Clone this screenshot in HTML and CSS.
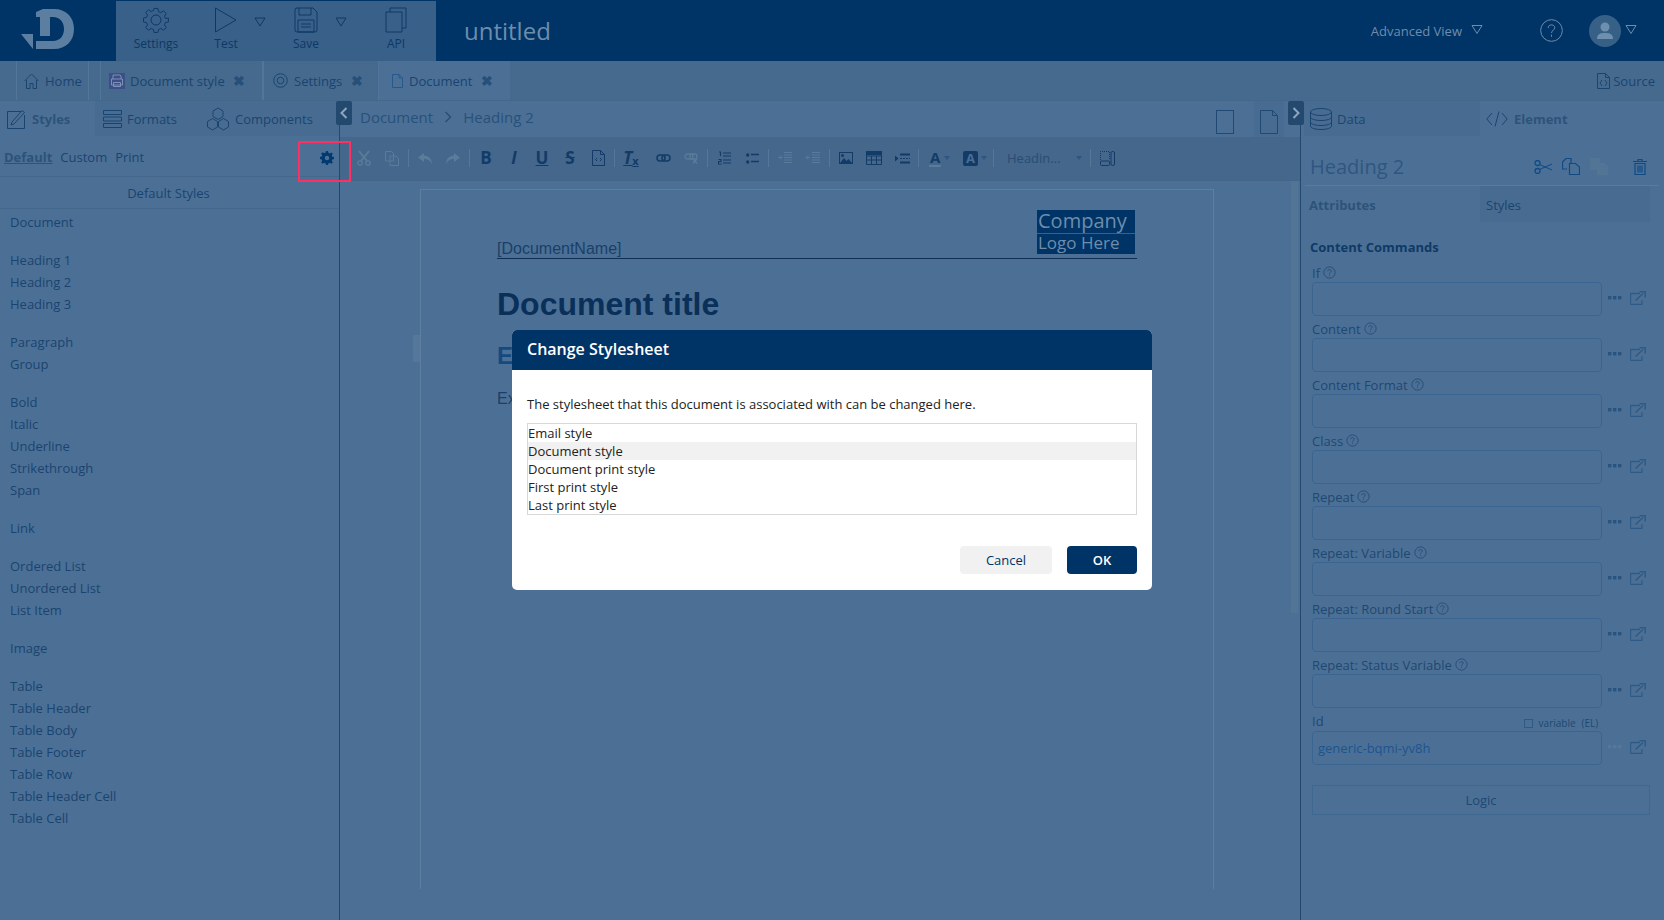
FILE: index.html
```html
<!DOCTYPE html>
<html lang="en">
<head>
  <meta charset="UTF-8">
  <title>untitled</title>
  <link rel="stylesheet" href="styles.css">
</head>
<body>

<svg class="defs" width="0" height="0">
  <symbol id="help" viewBox="0 0 12 12"><circle cx="6" cy="6" r="5.2" fill="none" stroke="currentColor" vector-effect="non-scaling-stroke"/><path d="M4.400 4.800C4.400 3.800 5.100 3.300 6 3.300S7.600 3.900 7.600 4.700C7.600 5.800 6 5.900 6 7.200M6 8v1" fill="none" stroke="currentColor" vector-effect="non-scaling-stroke"/></symbol>
  <symbol id="dots" viewBox="0 0 14 4"><rect x="0" y="0" width="3.400" height="3.400"/><rect x="5" y="0" width="3.400" height="3.400"/><rect x="10" y="0" width="3.400" height="3.400"/></symbol>
  <symbol id="popout" viewBox="0 0 16 14"><path d="M10 2.500H1.500a1 1 0 0 0-1 1v9a1 1 0 0 0 1 1h9.500a1 1 0 0 0 1-1V9" fill="none" stroke="currentColor" stroke-width="1.300"/><path d="M5.500 9.500L13 2.500M9.500 .8h5.700v5.700" fill="none" stroke="currentColor" stroke-width="1.500"/></symbol>
  <symbol id="tri" viewBox="0 0 12 10"><path d="M1 1h10L6 9z" fill="none" stroke="currentColor"/></symbol>
  <symbol id="gear" viewBox="0 0 26 26"><path d="M11 1h4l.7 3.300 2.400 1 2.800-1.900 2.800 2.800-1.900 2.800 1 2.400L26 11v4l-3.200.7-1 2.400 1.900 2.800-2.800 2.800-2.800-1.900-2.400 1L15 26h-4l-.7-3.200-2.400-1-2.800 1.900-2.800-2.800 1.900-2.800-1-2.400L0 15v-4l3.200-.7 1-2.400-1.900-2.800 2.800-2.800 2.800 1.900 2.400-1z" transform="translate(.5 .5) scale(.96)" fill="none" stroke="currentColor"/><circle cx="13" cy="13" r="5" fill="none" stroke="currentColor"/></symbol>
</svg>

<header class="topbar">
  <div class="logo">
    <svg width="56" height="42" viewBox="0 0 56 42"><path d="M1 26h12v15zM16 4l7-3h11c12 0 20 8 20 20s-8 20-20 20H16V33h17c7 0 11-5 11-12S40 9 33 9h-3v19H20V9h-4z" fill="#5c7fa1"/></svg>
  </div>
  <nav class="toolbox">
    <div class="tool tool-settings">
      <svg width="26" height="26"><use href="#gear"/></svg>
      <span>Settings</span>
    </div>
    <div class="tool tool-test">
      <svg width="24" height="26" viewBox="0 0 24 26"><path d="M1.500 1v24L22 13z" fill="none" stroke="currentColor"/></svg>
      <span>Test</span>
    </div>
    <svg class="tool-drop" width="12" height="10"><use href="#tri"/></svg>
    <div class="tool tool-save">
      <svg width="24" height="26" viewBox="0 0 24 26"><path d="M1 3a2 2 0 0 1 2-2h16l4 4v18a2 2 0 0 1-2 2H3a2 2 0 0 1-2-2z" fill="none" stroke="currentColor"/><path d="M5 1v7h12V1M4 13h16v12H4zM7 17h10M7 20h10" fill="none" stroke="currentColor"/></svg>
      <span>Save</span>
    </div>
    <svg class="tool-drop tool-drop-save" width="12" height="10"><use href="#tri"/></svg>
    <div class="tool tool-api">
      <svg width="22" height="26" viewBox="0 0 22 26"><path d="M5 5V1h16v20h-4M1 5h16v20H1z" fill="none" stroke="currentColor"/></svg>
      <span>API</span>
    </div>
  </nav>
  <div class="doc-title">untitled</div>
  <div class="topbar-right">
    <span class="adv-view">Advanced View</span>
    <svg class="adv-tri" width="12" height="11"><use href="#tri"/></svg>
    <svg class="top-help" width="25" height="25"><use href="#help"/></svg>
    <span class="avatar"><svg width="18" height="18" viewBox="0 0 18 18"><circle cx="9" cy="5" r="4.500" fill="#6e8fae"/><path d="M1 17c0-5 3-6 8-6s8 1 8 6z" fill="#6e8fae"/></svg></span>
    <svg class="avatar-tri" width="12" height="11"><use href="#tri"/></svg>
  </div>
</header>

<div class="tabbar">
  <div class="tab tab-home">
    <svg width="15" height="16" viewBox="0 0 15 16"><path d="M.5 8L7.500 1l7 7M2.500 7v8.500h3.500v-5h3v5h3.500V7" fill="none" stroke="currentColor"/></svg>
    <span>Home</span>
  </div>
  <div class="tab tab-style">
    <svg width="16" height="16" viewBox="0 0 16 16"><rect width="16" height="16" fill="#3c4f87"/><path d="M4 6V2h7l1 1v3M2.500 6h11v6h-11zM4.500 9.500h7v4h-7z" fill="none" stroke="#7c92b8"/></svg>
    <span>Document style</span><b class="close">&#10006;</b>
  </div>
  <div class="tab tab-settings">
    <svg width="15" height="15" viewBox="0 0 15 15"><circle cx="7.500" cy="7.500" r="6.800" fill="none" stroke="currentColor"/><circle cx="7.500" cy="7.500" r="3.300" fill="none" stroke="currentColor"/></svg>
    <span>Settings</span><b class="close">&#10006;</b>
  </div>
  <div class="tab tab-doc">
    <svg class="icon-blue" width="11" height="14" viewBox="0 0 11 14"><path d="M.5.500h6.500l3.500 3.500v9.500H.5zM7 .5V4h3.500" fill="none" stroke="currentColor"/></svg>
    <span>Document</span><b class="close">&#10006;</b>
  </div>
  <div class="tab-source">
    <svg width="13" height="16" viewBox="0 0 13 16"><path d="M.5.500h8l4 4v11H.5zM8.500.5v4h4M5 7L3 10l2 3M8 7l2 3-2 3" fill="none" stroke="currentColor"/></svg>
    <span>Source</span>
  </div>
</div>

<div class="workspace">
  <aside class="left-panel">
    <div class="panel-tabs">
      <div class="panel-tab panel-tab-on">
        <svg width="20" height="20" viewBox="0 0 20 20"><path d="M.5 2.500h14M.5 2.500v17h17V6" fill="none" stroke="currentColor"/><path d="M4 16l1-3L15 1.500l2.500 2L7 15z" fill="none" stroke="currentColor"/></svg>
        <b>Styles</b>
      </div>
      <div class="panel-tab tab-formats">
        <svg width="19" height="18" viewBox="0 0 19 18"><path d="M.5.500h18v4H.5zM.5 7h18v4H.5zM.5 13.500h18v4H.5z" fill="none" stroke="currentColor"/></svg>
        <span>Formats</span>
      </div>
      <div class="panel-tab tab-components">
        <svg width="24" height="24" viewBox="0 0 24 24"><path d="M12 1l5 3v5.500l-5 3-5-3V4zM6.500 11.500l5 3V20l-5 3-5-3v-5.500zM17.500 11.500l5 3V20l-5 3-5-3v-5.500z" fill="none" stroke="currentColor"/></svg>
        <span>Components</span>
      </div>
    </div>
    <div class="sheet-row">
      <b class="sheet-on">Default</b><span>Custom</span><span>Print</span>
      <svg class="sheet-gear" width="14" height="14" viewBox="0 0 14 14"><path d="M6 0h2l.4 1.800 1.400.6 1.600-1 1.400 1.400-1 1.600.6 1.400L14 6v2l-1.600.4-.6 1.400 1 1.600-1.400 1.400-1.600-1-1.400.6L8 14H6l-.4-1.600-1.400-.6-1.600 1-1.400-1.400 1-1.600-.6-1.400L0 8V6l1.600-.4.6-1.400-1-1.600 1.400-1.400 1.600 1 1.400-.6zM7 4.800a2.200 2.200 0 1 0 0 4.400 2.200 2.200 0 0 0 0-4.400z" fill="#003a70" fill-rule="evenodd"/></svg>
    </div>
    <div class="sheet-title">Default Styles</div>
    <div class="style-list">
      <ul><li>Document</li></ul>
      <ul><li>Heading 1</li><li>Heading 2</li><li>Heading 3</li></ul>
      <ul><li>Paragraph</li><li>Group</li></ul>
      <ul><li>Bold</li><li>Italic</li><li>Underline</li><li>Strikethrough</li><li>Span</li></ul>
      <ul><li>Link</li></ul>
      <ul><li>Ordered List</li><li>Unordered List</li><li>List Item</li></ul>
      <ul><li>Image</li></ul>
      <ul><li>Table</li><li>Table Header</li><li>Table Body</li><li>Table Footer</li><li>Table Row</li><li>Table Header Cell</li><li>Table Cell</li></ul>
    </div>
  </aside>

  <main class="center">
    <div class="crumbs">
      <span>Document</span>
      <svg width="8" height="12" viewBox="0 0 8 12"><path d="M1.500 1l5 5-5 5" fill="none" stroke="currentColor" stroke-width="1.500"/></svg>
      <span>Heading 2</span>
      <div class="view-btns">
        <span class="view-btn"><svg width="18" height="24"><rect x=".5" y=".5" width="17" height="23" fill="none" stroke="currentColor"/></svg></span>
        <span class="view-btn view-btn-on"><svg width="18" height="24"><path d="M.5.500h12l5 5v18H.5zM12.500.5v5h5" fill="none" stroke="currentColor"/></svg></span>
      </div>
    </div>

    <div class="toolbar">
      <span class="cell faded"><svg width="14" height="16" viewBox="0 0 14 16"><path d="M2 1l8 10M12 1L4 11" stroke="currentColor" stroke-width="2" fill="none"/><circle cx="3" cy="13" r="2.200" fill="none" stroke="currentColor" stroke-width="1.300"/><circle cx="11" cy="13" r="2.200" fill="none" stroke="currentColor" stroke-width="1.300"/></svg></span>
      <span class="cell faded"><svg width="14" height="15" viewBox="0 0 14 15"><path d="M.5.500h6l2 2V10H.5zM5 5h6l2.500 2.500v7H5z" fill="none" stroke="currentColor"/></svg></span>
      <i class="sep"></i>
      <span class="cell faded"><svg width="14" height="11" viewBox="0 0 14 11"><path d="M6 0L0 4.500 6 9V6c3 0 6 1 8 5 0-5-3-8-8-8.500z" fill="currentColor"/></svg></span>
      <span class="cell faded"><svg width="14" height="11" viewBox="0 0 14 11"><path d="M8 0l6 4.500L8 9V6c-3 0-6 1-8 5 0-5 3-8 8-8.500z" fill="currentColor"/></svg></span>
      <i class="sep"></i>
      <b class="cell tg">B</b>
      <b class="cell tg tg-i">I</b>
      <b class="cell tg tg-u">U</b>
      <b class="cell tg tg-s">S</b>
      <span class="cell"><svg width="13" height="16" viewBox="0 0 13 16"><path d="M.5.500h8l4 4v11H.5zM8.500.5v4h4" fill="none" stroke="currentColor"/><path d="M5 8L3.500 9.500 5 11M8 8l1.500 1.500L8 11" fill="none" stroke="currentColor"/></svg></span>
      <i class="sep"></i>
      <span class="cell tg tg-clear"><b>T</b><small>x</small></span>
      <span class="cell cell-link"><svg width="15" height="8" viewBox="0 0 15 8"><rect x="1" y="1" width="8" height="6" rx="3" fill="none" stroke="currentColor" stroke-width="1.500"/><rect x="6" y="1" width="8" height="6" rx="3" fill="none" stroke="currentColor" stroke-width="1.500"/></svg></span>
      <span class="cell faded"><svg width="14" height="11" viewBox="0 0 14 11"><rect x="1" y="1" width="8" height="5" rx="2.500" fill="none" stroke="currentColor" stroke-width="1.300"/><rect x="6" y="1" width="7" height="5" rx="2.500" fill="none" stroke="currentColor" stroke-width="1.300"/><path d="M9 6l4 4.500M13 6l-4 4.500" stroke="currentColor" stroke-width="1.200"/></svg></span>
      <i class="sep"></i>
      <span class="cell"><svg width="13" height="14" viewBox="0 0 13 14"><path d="M1 1h1.500v4M5 2h8M5 5h8M5 9h8M5 12h8M.5 8.500h2.500v2H.5v2.500h3" fill="none" stroke="currentColor" stroke-width="1.100"/></svg></span>
      <span class="cell"><svg width="13" height="11" viewBox="0 0 13 11"><circle cx="1.700" cy="2" r="1.700" fill="currentColor"/><circle cx="1.700" cy="9" r="1.700" fill="currentColor"/><path d="M5 1.500h8M5 8.500h8" stroke="currentColor" stroke-width="1.600"/></svg></span>
      <i class="sep"></i>
      <span class="cell faded"><svg width="14" height="12" viewBox="0 0 14 12"><path d="M6 .5h8M6 3h8M6 5.500h8M6 8h8M6 10.500h8M0 5.500h4M2 3.500l2 2-2 2" fill="none" stroke="currentColor"/></svg></span>
      <span class="cell faded"><svg width="14" height="12" viewBox="0 0 14 12"><path d="M6 .5h8M6 3h8M6 5.500h8M6 8h8M6 10.500h8M0 5.500h4M2 3.500l-2 2 2 2" fill="none" stroke="currentColor"/></svg></span>
      <i class="sep"></i>
      <span class="cell"><svg width="14" height="12" viewBox="0 0 14 12"><rect x=".5" y=".5" width="13" height="11" fill="none" stroke="currentColor"/><circle cx="3.500" cy="3.500" r="1.500" fill="currentColor"/><path d="M1 11l4-5 2.500 3 2-2 3.500 4z" fill="currentColor"/></svg></span>
      <span class="cell"><svg width="16" height="14" viewBox="0 0 16 14"><path d="M.5 1h15v12.500H.5zM.5 5h15M.5 9h15M5.500 5v8M10.500 5v8" fill="none" stroke="currentColor"/><rect y="0" width="16" height="4" fill="currentColor"/></svg></span>
      <span class="cell"><svg width="15" height="11" viewBox="0 0 15 11"><path d="M0 2.500L3.500 5.500 0 8.500zM5 .5h10v2H5zM5 8.500h10v2H5z" fill="currentColor"/><path d="M5 5.500h10" stroke="currentColor" stroke-dasharray="2 1"/></svg></span>
      <i class="sep"></i>
      <span class="color-btn color-btn-fg"><b class="a-under">A</b><i class="caret"></i></span>
      <span class="color-btn color-btn-bg"><b class="a-box">A</b><i class="caret"></i></span>
      <i class="sep"></i>
      <span class="format-select">Headin...<i class="caret"></i></span>
      <i class="sep"></i>
      <span class="cell"><svg width="15" height="15" viewBox="0 0 15 15"><path d="M.5 9V.5h9V9" fill="none" stroke="currentColor" stroke-dasharray="1 1"/><rect x=".5" y="10" width="9" height="4.500" rx="1" fill="none" stroke="currentColor"/><rect x="11" y=".5" width="3.500" height="14" rx="1.500" fill="none" stroke="currentColor"/></svg></span>
    </div>

    <div class="canvas">
      <div class="canvas-thumb-left"></div>
      <div class="doc-page">
        <div class="doc-header">
          <span class="doc-name">[DocumentName]</span>
          <div class="doc-logo"><span class="logo-l1">Company</span><span class="logo-l2">Logo Here</span></div>
        </div>
        <h1 class="doc-h1">Document title</h1>
        <h2 class="doc-h2">E</h2>
        <p class="doc-p">Ex</p>
      </div>
      <div class="canvas-scroll"><div class="canvas-thumb"></div></div>
    </div>
  </main>

  <aside class="right-panel">
    <div class="panel-tabs">
      <div class="panel-tab tab-data">
        <svg width="22" height="22" viewBox="0 0 22 22"><ellipse cx="11" cy="4" rx="10.500" ry="3.500" fill="none" stroke="currentColor"/><path d="M.5 4v14c0 2 4.700 3.500 10.500 3.500S21.500 20 21.500 18V4M.5 9c0 2 4.700 3.500 10.500 3.500S21.500 11 21.500 9M.5 14c0 2 4.700 3.500 10.500 3.500S21.500 16 21.500 14" fill="none" stroke="currentColor"/></svg>
        <span>Data</span>
      </div>
      <div class="panel-tab panel-tab-on tab-element">
        <svg width="22" height="16" viewBox="0 0 22 16"><path d="M6 2L.8 8 6 14M16 2l5.200 6L16 14M13 .5L9 15.500" fill="none" stroke="currentColor"/></svg>
        <b>Element</b>
      </div>
    </div>
    <div class="el-head">
      <span class="el-title">Heading 2</span>
      <div class="el-tools">
        <svg class="blue-icon" width="18" height="14" viewBox="0 0 18 14"><circle cx="3.500" cy="3" r="2.500" fill="none" stroke="currentColor" stroke-width="1.300"/><circle cx="3.500" cy="11" r="2.500" fill="none" stroke="currentColor" stroke-width="1.300"/><path d="M5.500 4.500L18 10M5.500 9.500L18 4" fill="none" stroke="currentColor"/></svg>
        <svg class="blue-icon" width="18" height="17" viewBox="0 0 18 17"><path d="M5 11H.5V4l3.500-3.500h5V5M7.500 5.500h6l4 3.500v7.500H7.500z" fill="none" stroke="currentColor" stroke-width="1.200"/></svg>
        <svg class="paste-icon" width="18" height="17" viewBox="0 0 18 17"><path d="M0 0h10v5h4l4 4v8H7v-5H0z" fill="currentColor"/></svg>
        <svg class="trash-icon blue-icon" width="14" height="16" viewBox="0 0 14 16"><path d="M0 2.500h14M5 2.500V.5h4v2M2 4.500h10v11H2zM5 6.500v7M7 6.500v7M9 6.500v7" fill="none" stroke="currentColor" stroke-width="1.200"/></svg>
      </div>
    </div>
    <div class="el-tabs">
      <b class="el-tab">Attributes</b>
      <span class="el-tab el-tab-off">Styles</span>
    </div>
    <h3 class="cmd-title">Content Commands</h3>
    <div class="field"><label>If <svg width="13" height="13"><use href="#help"/></svg></label><div class="field-row"><div class="input"></div><svg class="dots" width="14" height="4"><use href="#dots"/></svg><svg class="popout" width="16" height="14"><use href="#popout"/></svg></div></div>
    <div class="field"><label>Content <svg width="13" height="13"><use href="#help"/></svg></label><div class="field-row"><div class="input"></div><svg class="dots" width="14" height="4"><use href="#dots"/></svg><svg class="popout" width="16" height="14"><use href="#popout"/></svg></div></div>
    <div class="field"><label>Content Format <svg width="13" height="13"><use href="#help"/></svg></label><div class="field-row"><div class="input"></div><svg class="dots" width="14" height="4"><use href="#dots"/></svg><svg class="popout" width="16" height="14"><use href="#popout"/></svg></div></div>
    <div class="field"><label>Class <svg width="13" height="13"><use href="#help"/></svg></label><div class="field-row"><div class="input"></div><svg class="dots" width="14" height="4"><use href="#dots"/></svg><svg class="popout" width="16" height="14"><use href="#popout"/></svg></div></div>
    <div class="field"><label>Repeat <svg width="13" height="13"><use href="#help"/></svg></label><div class="field-row"><div class="input"></div><svg class="dots" width="14" height="4"><use href="#dots"/></svg><svg class="popout" width="16" height="14"><use href="#popout"/></svg></div></div>
    <div class="field"><label>Repeat: Variable <svg width="13" height="13"><use href="#help"/></svg></label><div class="field-row"><div class="input"></div><svg class="dots" width="14" height="4"><use href="#dots"/></svg><svg class="popout" width="16" height="14"><use href="#popout"/></svg></div></div>
    <div class="field"><label>Repeat: Round Start <svg width="13" height="13"><use href="#help"/></svg></label><div class="field-row"><div class="input"></div><svg class="dots" width="14" height="4"><use href="#dots"/></svg><svg class="popout" width="16" height="14"><use href="#popout"/></svg></div></div>
    <div class="field"><label>Repeat: Status Variable <svg width="13" height="13"><use href="#help"/></svg></label><div class="field-row"><div class="input"></div><svg class="dots" width="14" height="4"><use href="#dots"/></svg><svg class="popout" width="16" height="14"><use href="#popout"/></svg></div></div>
    <div class="field field-id">
      <label>Id <span class="var-check"><i class="checkbox"></i>variable <small>(EL)</small></span></label>
      <div class="field-row"><div class="input input-val">generic-bqmi-yv8h</div><svg class="dots dots-off" width="14" height="4"><use href="#dots"/></svg><svg class="popout" width="16" height="14"><use href="#popout"/></svg></div>
    </div>
    <div class="logic-btn">Logic</div>
  </aside>

  <span class="collapse-btn collapse-left"><svg width="8" height="12" viewBox="0 0 8 12"><path d="M6.500 1l-5 5 5 5" fill="none" stroke="currentColor" stroke-width="2"/></svg></span>
  <span class="collapse-btn collapse-right"><svg width="8" height="12" viewBox="0 0 8 12"><path d="M1.500 1l5 5-5 5" fill="none" stroke="currentColor" stroke-width="2"/></svg></span>
</div>

<div class="highlight"></div>

<div class="modal">
  <div class="modal-head">Change Stylesheet</div>
  <div class="modal-body">
    <p class="modal-text">The stylesheet that this document is associated with can be changed here.</p>
    <ul class="sheet-list">
      <li>Email style</li>
      <li class="sheet-current">Document style</li>
      <li>Document print style</li>
      <li>First print style</li>
      <li>Last print style</li>
    </ul>
    <div class="modal-btns">
      <button type="button" class="btn btn-cancel">Cancel</button>
      <button type="button" class="btn btn-ok">OK</button>
    </div>
  </div>
</div>

</body>
</html>
```

FILE: styles.css
```css
* {
  box-sizing: border-box;
}

html, body {
  margin: 0;
  height: 920px;
  overflow: hidden;
}

body {
  position: relative;
  font-family: "Open Sans", sans-serif;
  font-size: 13px;
  color: #1a4470;
  background-color: #4c7095;
}

.defs {
  position: absolute;
}

ul {
  list-style: none;
  margin: 0;
  padding: 0;
}

/* top bar */
.topbar {
  display: flex;
  height: 61px;
  background-color: #003366;
  color: #5c7fa1;
}

.logo {
  width: 116px;
  padding: 8px 0 0 20px;
}

.toolbox {
  display: flex;
  width: 320px;
  margin-top: 1px;
  background-color: #386088;
  color: #0e3866;
}

.tool {
  display: flex;
  flex-direction: column;
  align-items: center;
  gap: 3px;
  width: 60px;
  padding-top: 6px;
  font-size: 12px;
  line-height: 16px;
  color: #0e3866;
}

.tool-settings {
  margin-left: 10px;
}

.tool-test {
  margin-left: 20px;
  width: 40px;
}

.tool-save {
  margin-left: 20px;
  width: 40px;
}

.tool-api {
  margin-left: 29px;
  width: 40px;
}

.tool-drop {
  margin: 16px 0 0 8px;
}

.tool-drop-save {
  margin-left: 9px;
}

.doc-title {
  margin-left: 28px;
  font-size: 24px;
  line-height: 61px;
  color: #6d8dac;
}

.topbar-right {
  display: flex;
  align-items: center;
  margin-left: auto;
  padding-right: 27px;
  color: #6d8dac;
}

.adv-view {
  font-size: 13px;
}

.adv-tri {
  margin: 0 0 2px 9px;
}

.top-help {
  margin-left: 56px;
}

.avatar {
  display: flex;
  align-items: center;
  justify-content: center;
  width: 32px;
  height: 32px;
  margin-left: 25px;
  border-radius: 50%;
  background-color: #376087;
}

.avatar-tri {
  margin: 0 0 2px 4px;
}

/* tabs */
.tabbar {
  display: flex;
  align-items: stretch;
  height: 40px;
  padding-left: 16px;
  background-color: #466a8e;
  border-bottom: 1px solid #44688c;
}

.tab {
  display: flex;
  align-items: center;
  gap: 6px;
  border-left: 1px solid #52769a;
  font-size: 13px;
}

.tab-home {
  width: 73px;
  padding-left: 7px;
  margin-right: 11px;
  border-right: 1px solid #52769a;
}

.tab-style {
  width: 162px;
  padding-left: 8px;
  gap: 5px;
}

.tab-settings {
  width: 116px;
  padding-left: 9px;
  border-left: 2px solid #52769a;
}

.tab-doc {
  width: 132px;
  padding-left: 13px;
  background-color: #4c7095;
}

.icon-blue {
  color: #25598e;
}

.close {
  margin-left: 3px;
  font-size: 14px;
  color: #274f7a;
}

.tab-source {
  display: flex;
  align-items: center;
  gap: 3px;
  margin-left: auto;
  padding-right: 9px;
}

/* main columns */
.workspace {
  display: flex;
  position: relative;
  height: 819px;
}

.collapse-btn {
  display: flex;
  align-items: center;
  justify-content: center;
  position: absolute;
  top: 0;
  width: 16px;
  height: 24px;
  border-radius: 2px;
  background-color: #23496f;
  color: #8ea6bd;
}

.collapse-left {
  left: 336px;
}

.collapse-right {
  left: 1288px;
}

.left-panel {
  width: 340px;
  border-right: 1px solid #23496f;
}

.panel-tabs {
  display: flex;
  height: 35px;
}

.panel-tab {
  display: flex;
  align-items: center;
  background-color: #486c91;
}

.panel-tab-on {
  background-color: #4c7095;
}

.panel-tab-on b {
  color: #2c5379;
}

.left-panel .panel-tab {
  gap: 5px;
}

.left-panel .panel-tab-on {
  width: 95px;
  padding-left: 7px;
}

.tab-formats {
  width: 100px;
  padding-left: 8px;
}

.tab-components {
  width: 144px;
  padding-left: 11px;
}

.sheet-row {
  display: flex;
  align-items: center;
  gap: 8px;
  height: 41px;
  padding: 2px 4px 0 4px;
  border-bottom: 1px solid #44688c;
}

.sheet-on {
  text-decoration: underline;
  color: #2c5379;
}

.sheet-gear {
  margin: 2px 1px 0 auto;
}

.sheet-title {
  height: 32px;
  line-height: 32px;
  padding-right: 2px;
  text-align: center;
  border-bottom: 1px solid #44688c;
}

.style-list {
  padding: 2px 10px 0;
}

.style-list ul {
  margin-bottom: 16px;
}

.style-list li {
  height: 22px;
  line-height: 22px;
}

.center {
  display: flex;
  flex-direction: column;
  flex: 1;
  min-width: 0;
}

.crumbs {
  display: flex;
  align-items: center;
  gap: 11px;
  height: 36px;
  padding: 0 0 4px 20px;
  font-size: 15px;
  color: #28507a;
}

.view-btns {
  display: flex;
  margin: 0 16px -4px auto;
  height: 36px;
}

.view-btn {
  display: flex;
  align-items: center;
  justify-content: center;
  width: 30px;
  padding-top: 6px;
  color: #1f4a76;
}

.view-btn-on {
  margin-left: 14px;
  background-color: #486c91;
}

.toolbar {
  display: flex;
  align-items: center;
  height: 44px;
  padding: 0 0 1px 10px;
  background-color: #44678b;
  color: #123b68;
  border-bottom: 1px solid #42658a;
}

.cell {
  display: flex;
  flex: none;
  align-items: center;
  justify-content: center;
  width: 28px;
}

.cell-link {
  margin-left: 4px;
}

.faded {
  color: #5b7b9b;
}

.sep {
  flex: none;
  width: 1px;
  height: 18px;
  margin: 0 2px;
  background-color: #557899;
}

.tg {
  font-size: 17px;
  line-height: 20px;
  font-style: normal;
}

.tg-i {
  font-style: italic;
}

.tg-u {
  text-decoration: underline;
}

.tg-s {
  text-decoration: line-through;
}

.tg-clear {
  font-style: italic;
  text-decoration: underline;
}

.tg-clear small {
  margin-top: 6px;
  font-size: 11px;
  font-style: normal;
  font-weight: 700;
}

.color-btn {
  display: flex;
  flex: none;
  align-items: center;
  gap: 3px;
  width: 35px;
}

.color-btn-fg {
  padding-left: 8px;
}

.color-btn-bg {
  padding-left: 7px;
}

.a-under {
  font-size: 15px;
  line-height: 16px;
  border-bottom: 2px solid #5b7b9b;
  padding: 0 1px;
}

.a-box {
  width: 15px;
  height: 15px;
  line-height: 15px;
  text-align: center;
  font-size: 13px;
  border-radius: 2px;
  color: #4a6e92;
  background-color: #123b68;
}

.caret {
  display: inline-block;
  width: 0;
  height: 0;
  border: 3px solid transparent;
  border-top: 4px solid #2f5680;
  border-bottom: 0;
}

.format-select {
  display: flex;
  flex: none;
  align-items: center;
  width: 75px;
  margin: 0 6px 0 11px;
  font-size: 13px;
  color: #2a4c74;
}

.format-select .caret {
  margin-left: auto;
}

.canvas {
  display: flex;
  flex: 1;
  min-height: 0;
  position: relative;
  padding: 8px 0 0 80px;
}

.canvas-thumb-left {
  position: absolute;
  left: 73px;
  top: 154px;
  width: 7px;
  height: 27px;
  background-color: #557799;
}

.doc-page {
  width: 794px;
  height: 700px;
  padding: 20px 76px 0;
  border: 1px solid #5d7f9f;
  border-bottom: 0;
}

.doc-header {
  display: flex;
  align-items: flex-end;
  justify-content: space-between;
  height: 49px;
  padding-right: 2px;
  border-bottom: 1px solid #0f2f55;
  font-family: "Liberation Sans", sans-serif;
  font-size: 16px;
  color: #1a3f68;
}

.doc-name {
  line-height: 18px;
}

.doc-logo {
  display: flex;
  flex-direction: column;
  width: 98px;
  margin-bottom: 4px;
  background-color: #003366;
  font-family: "Open Sans", sans-serif;
  color: #6d8dac;
}

.logo-l1 {
  height: 24px;
  padding-left: 1px;
  font-size: 20px;
  line-height: 22px;
  border-bottom: 1px solid #6d4a74;
}

.logo-l2 {
  height: 20px;
  padding-left: 1px;
  font-size: 17px;
  line-height: 18px;
}

.doc-h1 {
  margin: 25px 0 0;
  font-family: "Liberation Sans", sans-serif;
  font-size: 32px;
  line-height: 40px;
  color: #0a2f58;
}

.doc-h2 {
  margin: 17px 0 0;
  font-family: "Liberation Sans", sans-serif;
  font-size: 24px;
  line-height: 30px;
  color: #154a80;
}

.doc-p {
  margin: 18px 0 0;
  font-family: "Liberation Sans", sans-serif;
  font-size: 16px;
  line-height: 20px;
  color: #1a3f68;
}

.canvas-scroll {
  position: absolute;
  top: 0;
  right: 0;
  width: 9px;
  height: 100%;
}

.canvas-thumb {
  width: 7px;
  height: 432px;
  background-color: #527495;
}

.right-panel {
  width: 364px;
  padding-left: 0;
  border-left: 1px solid #23496f;
}

.right-panel .panel-tabs {
  margin-left: 3px;
}

.tab-data {
  gap: 5px;
  width: 176px;
  padding-left: 6px;
}

.tab-element {
  gap: 6px;
  padding-left: 6px;
  flex: 1;
}

.el-head {
  display: flex;
  align-items: center;
  height: 50px;
  margin: 0 5px 0 4px;
  padding: 12px 0 0 5px;
  border-bottom: 1px solid #5a7b9b;
}

.el-title {
  font-size: 20px;
  color: #2f5680;
}

.el-tools {
  display: flex;
  align-items: center;
  gap: 10px;
  margin-left: auto;
  margin-right: 12px;
}

.blue-icon {
  color: #0f4a85;
}

.paste-icon {
  color: #527596;
}

.trash-icon {
  margin-left: 15px;
}

.el-tabs {
  display: flex;
  margin-right: 14px;
  height: 36px;
  line-height: 38px;
}

.el-tab {
  width: 179px;
  padding-left: 8px;
  color: #2c5379;
}

.el-tab-off {
  flex: 1;
  padding-left: 6px;
  background-color: #486c91;
  color: #1a4470;
}

.cmd-title {
  margin: 16px 0 7px 9px;
  font-size: 13px;
  line-height: 18px;
  color: #0f3a66;
}

.field {
  height: 53px;
  margin-bottom: 3px;
  padding-left: 11px;
}

.field label {
  display: flex;
  align-items: center;
  gap: 3px;
  height: 19px;
  color: #1e4872;
}

.field label svg {
  color: #264f7a;
}

.field-row {
  display: flex;
  align-items: center;
}

.input {
  width: 290px;
  height: 34px;
  border: 1px solid #3a6591;
  border-radius: 4px;
}

.dots {
  margin-left: 6px;
  margin-top: -2px;
  fill: #2a5480;
}

.dots-off {
  fill: #557899;
}

.popout {
  margin-left: 8px;
  margin-top: -3px;
  color: #2e5a87;
}

.field-id label {
  height: 20px;
}

.field-id {
  margin-bottom: 0;
}

.var-check {
  display: flex;
  align-items: center;
  gap: 6px;
  margin-left: 197px;
  margin-top: 4px;
  font-size: 10px;
}

.var-check small {
  font-size: 10px;
}

.checkbox {
  width: 9px;
  height: 9px;
  border: 1px solid #2e5a87;
}

.input-val {
  padding-left: 5px;
  line-height: 32px;
  color: #1c5490;
}

.logic-btn {
  width: 338px;
  height: 30px;
  margin: 21px 0 0 11px;
  line-height: 28px;
  text-align: center;
  border: 1px solid #3f6890;
  color: #1e4872;
}

/* highlight over the gear */
.highlight {
  position: absolute;
  left: 298px;
  top: 141px;
  width: 53px;
  height: 41px;
  border: 2px solid #ff2f62;
}

/* dialog */
.modal {
  position: absolute;
  left: 512px;
  top: 330px;
  width: 640px;
  height: 260px;
  border-radius: 5px;
  overflow: hidden;
  background-color: #fff;
  color: #222;
}

.modal-head {
  height: 40px;
  padding-left: 15px;
  font-size: 16px;
  font-weight: 600;
  line-height: 38px;
  color: #fff;
  background-color: #003366;
}

.modal-body {
  padding: 24px 15px 0;
}

.modal-text {
  margin: 0;
  font-size: 13px;
  line-height: 21px;
}

.sheet-list {
  height: 92px;
  margin-top: 8px;
  border: 1px solid #d8d8d8;
}

.sheet-list li {
  height: 18px;
  line-height: 18px;
  font-size: 13px;
}

.sheet-current {
  background-color: #f1f1f1;
}

.modal-btns {
  display: flex;
  justify-content: flex-end;
  gap: 15px;
  margin-top: 31px;
}

.btn {
  height: 28px;
  border: 0;
  border-radius: 4px;
  font-family: "Open Sans", sans-serif;
  font-size: 13px;
}

.btn-cancel {
  width: 92px;
  color: #003366;
  background-color: #f1f1f1;
}

.btn-ok {
  width: 70px;
  font-weight: 600;
  color: #fff;
  background-color: #003366;
}
```
